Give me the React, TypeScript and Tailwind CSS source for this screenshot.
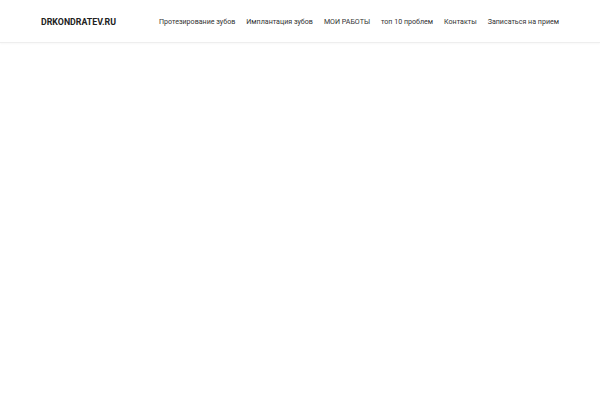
const links = [
  "Протезирование зубов",
  "Имплантация зубов",
  "МОИ РАБОТЫ",
  "топ 10 проблем",
  "Контакты",
  "Записаться на прием",
];

export default function App() {
  return (
    <div className="min-h-screen bg-white" style={{ fontFamily: "Roboto, 'Noto Sans', sans-serif" }}>
      <header className="flex h-[43px] items-center justify-between border-b border-[#eeeeee] px-[41px] pt-[3px] shadow-[0_1px_2px_rgba(0,0,0,0.03)]">
        <a className="whitespace-nowrap text-[8.8px] font-bold text-[#222222]">DRKONDRATEV.RU</a>
        <nav className="flex items-center gap-[11px]">
          {links.map((l) => (
            <a key={l} className="whitespace-nowrap text-[7.1px] text-[#333333]">
              {l}
            </a>
          ))}
        </nav>
      </header>
    </div>
  );
}
